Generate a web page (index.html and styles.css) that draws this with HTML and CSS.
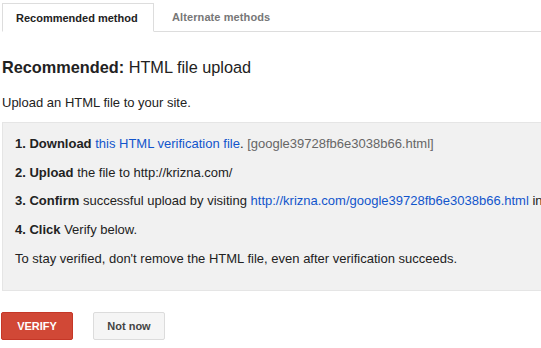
FILE: index.html
```html
<!DOCTYPE html>
<html lang="en">
<head>
  <meta charset="UTF-8" />
  <title>Verify ownership</title>
  <link rel="stylesheet" href="styles.css">
</head>
<body>
  <div class="tabs">
    <div class="tab active">Recommended method</div>
    <div class="tab">Alternate methods</div>
    <div class="tab-rest"></div>
  </div>

  <div class="content">
    <h2 class="title"><b>Recommended:</b> HTML file upload</h2>
    <p class="intro">Upload an HTML file to your site.</p>

    <div class="steps">
      <p><b>1. Download</b> <a href="#">this HTML verification file</a>. <span class="muted">[google39728fb6e3038b66.html]</span></p>
      <p><b>2. Upload</b> the file to http://krizna.com/</p>
      <p><b>3. Confirm</b> successful upload by visiting <a href="#">http://krizna.com/google39728fb6e3038b66.html</a> in your browser.</p>
      <p><b>4. Click</b> Verify below.</p>
      <p>To stay verified, don't remove the HTML file, even after verification succeeds.</p>
    </div>

    <div class="actions">
      <button class="btn btn-red">VERIFY</button>
      <button class="btn btn-gray">Not now</button>
    </div>
  </div>
</body>
</html>
```

FILE: styles.css
```css
html, body {
  margin: 0;
  overflow: hidden;
}

body {
  font-family: "Liberation Sans", Arial, sans-serif;
  font-size: 13px;
  color: #222;
  background: #fff;
  padding: 3px 0 0 2px;
}

.tabs {
  display: flex;
  height: 29px;
}

.tab {
  font-size: 11px;
  font-weight: bold;
  color: #777;
  padding: 0 18px;
  line-height: 28px;
  border-bottom: 1px solid #ddd;
  letter-spacing: 0.1px;
}

.tab.active {
  color: #222;
  border: 1px solid #ddd;
  border-bottom-color: #fff;
  padding: 0 13px;
  width: 124px;
  letter-spacing: 0;
}

.tab-rest {
  flex: 1;
  border-bottom: 1px solid #ddd;
}

.title {
  font-size: 16.3px;
  font-weight: normal;
  margin: 26px 0 0;
  color: #222;
}

.intro {
  margin: 18px 0 0;
}

.steps {
  margin-top: 12px;
  background: #f1f1f1;
  border: 1px solid #e5e5e5;
  border-right: none;
  width: 640px;
  padding: 0 12px 23px;
  white-space: nowrap;
}

.steps p {
  margin: 12.8px 0 0;
  line-height: 16px;
}

.steps a {
  color: #15c;
  text-decoration: none;
}

.muted {
  color: #666;
}

.actions {
  display: flex;
  gap: 20px;
  margin: 21px 0 0 -1px;
}

.btn {
  font-family: "Liberation Sans", Arial, sans-serif;
  font-size: 11px;
  font-weight: bold;
  height: 28px;
  width: 72px;
  border-radius: 2px;
  cursor: pointer;
}

.btn-red {
  background: #d14836;
  border: 1px solid #c53727;
  color: #fff;
}

.btn-gray {
  background: #f5f5f5;
  border: 1px solid #dcdcdc;
  color: #444;
}
```
